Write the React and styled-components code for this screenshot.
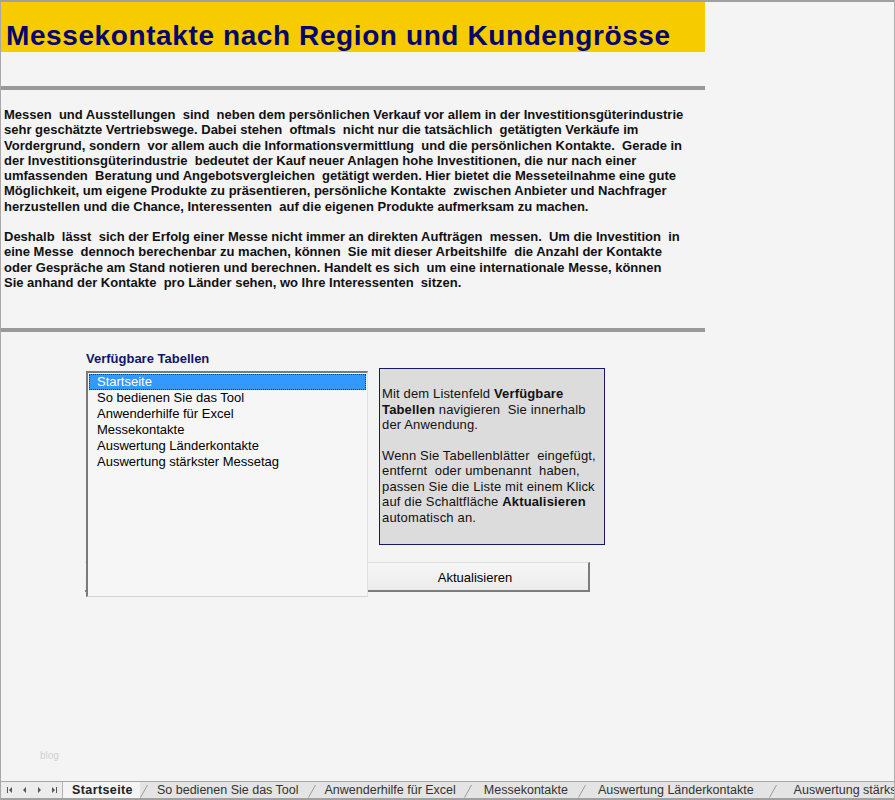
import React from 'react';
import styled, { createGlobalStyle } from 'styled-components';

const GlobalStyle = createGlobalStyle`
  html, body {
    margin: 0;
    padding: 0;
    background: #f4f4f4;
  }
  * {
    box-sizing: border-box;
  }
`;

const Sheet = styled.div`
  position: relative;
  display: flex;
  flex-direction: column;
  width: 895px;
  height: 800px;
  border-top: 2px solid #a0a0a0;
  border-left: 1px solid #a8a8a8;
  border-right: 1px solid #b0b0b0;
  background: #f4f4f4;
  font-family: 'Liberation Sans', Arial, sans-serif;
  overflow: hidden;
`;

const Content = styled.div`
  width: 704px;
`;

const Header = styled.div`
  display: flex;
  align-items: center;
  height: 50px;
  padding: 17px 0 0 5px;
  background: #f6cb00;
`;

const Title = styled.h1`
  margin: 0;
  font-size: 28px;
  font-weight: bold;
  letter-spacing: 0.6px;
  color: #05056e;
  white-space: nowrap;
`;

const Rule = styled.div`
  height: 4px;
  margin-top: ${p => p.$top}px;
  background: #999999;
`;

const Text = styled.div`
  padding: 17px 0 0 3px;
  font-size: 13px;
  font-weight: bold;
  line-height: 15.3px;
  color: #111;
`;

const Para = styled.p`
  margin: 0 0 15px;
  white-space: pre;
`;

const Line = styled.span`
  display: block;
`;

const Panel = styled.div`
  display: grid;
  grid-template-columns: 283px 11px 211px 15px;
  grid-template-rows: 17px 177px 17px 30px 5px;
  margin-top: 19px;
  padding-left: 84px;
`;

const Label = styled.div`
  grid-column: 1 / 3;
  grid-row: 1;
  font-size: 13px;
  font-weight: bold;
  line-height: 15px;
  color: #14146a;
  padding-left: 1px;
`;

const ListBox = styled.ul`
  position: relative;
  z-index: 1;
  grid-column: 1;
  grid-row: 2 / 6;
  margin: 3px 0 0 1px;
  padding: 1px 0 0 1px;
  list-style: none;
  background: #f6f6f6;
  border-top: 2px solid #7a7a7a;
  border-left: 2px solid #7a7a7a;
  border-right: 1px solid #e2e2e2;
  border-bottom: 1px solid #d6d6d6;
  font-size: 13px;
  line-height: 16px;
`;

const Item = styled.li`
  padding-left: 8px;
  margin-right: 1px;
  height: 16px;
  color: ${p => (p.$active ? '#ffffff' : '#000000')};
  background: ${p => (p.$active ? '#3399ff' : 'transparent')};
  outline: ${p => (p.$active ? '1px dotted #333' : 'none')};
  outline-offset: -1px;
`;

const InfoBox = styled.div`
  grid-column: 3 / 5;
  grid-row: 2;
  padding: 17px 3px 0 2px;
  background: #dcdcdc;
  border: 1px solid #17176b;
  font-size: 13px;
  line-height: 15.4px;
  letter-spacing: 0.15px;
  color: #111;
`;

const InfoPara = styled.p`
  margin: 0 0 15.4px;
  white-space: pre;
`;

const Button = styled.button`
  grid-column: 1 / 4;
  grid-row: 4;
  display: flex;
  justify-content: flex-end;
  align-items: center;
  padding: 0;
  background: linear-gradient(#f6f6f6, #ececec);
  border: 0;
  border-top: 1px solid #dddddd;
  border-right: 2px solid #7c7c7c;
  border-bottom: 2px solid #7c7c7c;
  font-family: 'Liberation Sans', Arial, sans-serif;
  font-size: 13px;
  color: #000;
`;

const ButtonLabel = styled.span`
  width: 220px;
  padding: 1px 6px 0 0;
  text-align: center;
`;

const Watermark = styled.div`
  margin-top: auto;
  padding: 0 0 20px 39px;
  font-size: 10px;
  color: #d0d0d0;
`;

const TabBar = styled.div`
  display: flex;
  align-items: stretch;
  height: 19px;
  border-top: 1px solid #a6a6a6;
  border-bottom: 2px solid #a0a0a0;
  background: #e4e4e4;
  font-size: 12.5px;
  color: #333;
  white-space: nowrap;
`;

const Nav = styled.div`
  flex: none;
  display: flex;
  align-items: center;
  gap: 8px;
  width: 62px;
  padding-left: 5px;
  border-right: 1px solid #b4b4b4;
  background: #ececec;
`;

const Tab = styled.div`
  flex: none;
  display: flex;
  align-items: center;
  padding: 0 ${p => p.$pr}px 0 ${p => p.$pl}px;
  background: ${p => (p.$active ? '#f4f4f4' : 'transparent')};
  font-weight: ${p => (p.$active ? 'bold' : 'normal')};
  letter-spacing: ${p => (p.$active ? '0.4px' : '0')};
  color: ${p => (p.$active ? '#222' : '#333')};
`;

const Slash = styled.svg`
  flex: none;
  width: 8px;
  height: 16px;
  align-self: flex-end;
`;

function NavIcon({ dir, bar }) {
  const right = dir === 'right';
  return (
    <svg width="7" height="8" viewBox="0 0 7 8">
      {right ? (
        <polygon points={bar ? '1,1 4,4 1,7' : '2,1 5,4 2,7'} fill="#555" />
      ) : (
        <polygon points={bar ? '6,1 3,4 6,7' : '5,1 2,4 5,7'} fill="#555" />
      )}
      {bar && <rect x={right ? 5 : 1} y="1" width="1" height="6" fill="#555" />}
    </svg>
  );
}

const tabs = [
  'Startseite',
  'So bedienen Sie das Tool',
  'Anwenderhilfe für Excel',
  'Messekontakte',
  'Auswertung Länderkontakte',
  'Auswertung stärkster Messetag',
];

const sheetTabs = [
  { name: tabs[0], pl: 9, pr: 7 },
  { name: tabs[1], pl: 9, pr: 9 },
  { name: tabs[2], pl: 9, pr: 8 },
  { name: tabs[3], pl: 12, pr: 10 },
  { name: tabs[4], pl: 12, pr: 15 },
  { name: tabs[5], pl: 17, pr: 10 },
];

const para1 = [
  'Messen  und Ausstellungen  sind  neben dem persönlichen Verkauf vor allem in der Investitionsgüterindustrie',
  'sehr geschätzte Vertriebswege. Dabei stehen  oftmals  nicht nur die tatsächlich  getätigten Verkäufe im',
  'Vordergrund, sondern  vor allem auch die Informationsvermittlung  und die persönlichen Kontakte.  Gerade in',
  'der Investitionsgüterindustrie  bedeutet der Kauf neuer Anlagen hohe Investitionen, die nur nach einer',
  'umfassenden  Beratung und Angebotsvergleichen  getätigt werden. Hier bietet die Messeteilnahme eine gute',
  'Möglichkeit, um eigene Produkte zu präsentieren, persönliche Kontakte  zwischen Anbieter und Nachfrager',
  'herzustellen und die Chance, Interessenten  auf die eigenen Produkte aufmerksam zu machen.',
];

const para2 = [
  'Deshalb  lässt  sich der Erfolg einer Messe nicht immer an direkten Aufträgen  messen.  Um die Investition  in',
  'eine Messe  dennoch berechenbar zu machen, können  Sie mit dieser Arbeitshilfe  die Anzahl der Kontakte',
  'oder Gespräche am Stand notieren und berechnen. Handelt es sich  um eine internationale Messe, können',
  'Sie anhand der Kontakte  pro Länder sehen, wo Ihre Interessenten  sitzen.',
];

function App() {
  return (
    <>
      <GlobalStyle />
      <Sheet>
        <Content>
          <Header>
            <Title>Messekontakte nach Region und Kundengrösse</Title>
          </Header>
          <Rule $top={34} />
          <Text>
            <Para>
              {para1.map(l => (
                <Line key={l}>{l}</Line>
              ))}
            </Para>
            <Para>
              {para2.map(l => (
                <Line key={l}>{l}</Line>
              ))}
            </Para>
          </Text>
          <Rule $top={38} />
          <Panel>
            <Label>Verfügbare Tabellen</Label>
            <ListBox>
              {tabs.map((t, i) => (
                <Item key={t} $active={i === 0}>
                  {t}
                </Item>
              ))}
            </ListBox>
            <InfoBox>
              <InfoPara>
                {'Mit dem Listenfeld '}<b>Verfügbare</b>
                <br />
                <b>Tabellen</b>{' navigieren  Sie innerhalb'}
                <br />
                der Anwendung.
              </InfoPara>
              <InfoPara>
                {'Wenn Sie Tabellenblätter  eingefügt,'}
                <br />
                {'entfernt  oder umbenannt  haben,'}
                <br />
                passen Sie die Liste mit einem Klick
                <br />
                {'auf die Schaltfläche '}<b>Aktualisieren</b>
                <br />
                automatisch an.
              </InfoPara>
            </InfoBox>
            <Button>
              <ButtonLabel>Aktualisieren</ButtonLabel>
            </Button>
          </Panel>
        </Content>
        <Watermark>blog</Watermark>
        <TabBar>
          <Nav>
            <NavIcon dir="left" bar />
            <NavIcon dir="left" />
            <NavIcon dir="right" />
            <NavIcon dir="right" bar />
          </Nav>
          {sheetTabs.map((t, i) => (
            <React.Fragment key={t.name}>
              <Tab $active={i === 0} $pl={t.pl} $pr={t.pr}>
                {t.name}
              </Tab>
              <Slash viewBox="0 0 8 16">
                <line x1="0.5" y1="15.5" x2="7.5" y2="3" stroke="#9a9a9a" strokeWidth="1" />
              </Slash>
            </React.Fragment>
          ))}
        </TabBar>
      </Sheet>
    </>
  );
}

export default App;
